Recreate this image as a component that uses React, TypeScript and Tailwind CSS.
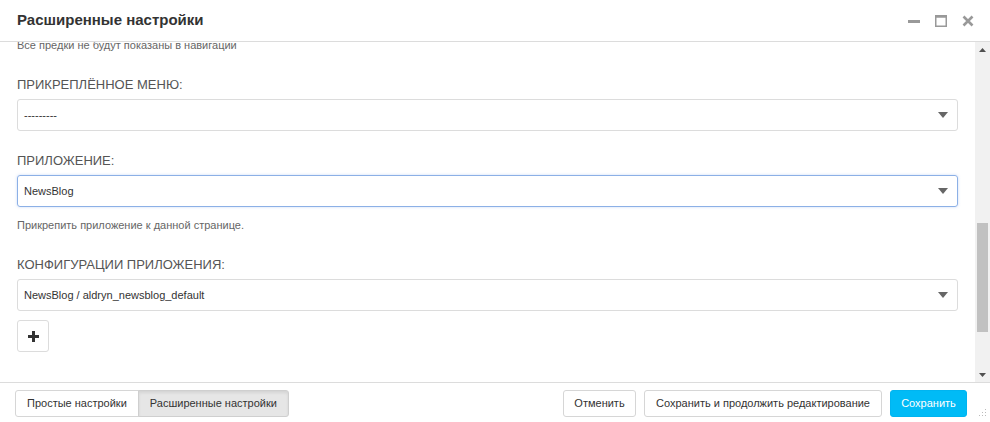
const font = { fontFamily: '"Liberation Sans", Arial, sans-serif' };

function Caret() {
  return (
    <svg width="10" height="6" viewBox="0 0 10 6" className="shrink-0">
      <path d="M0 0 L10 0 L5 6 Z" fill="#666" />
    </svg>
  );
}

function SelectBox({ value, focused = false }: { value: string; focused?: boolean }) {
  return (
    <div
      className={
        focused
          ? "flex h-[32px] items-center justify-between rounded-[3px] border border-[#8cb0e6] pl-[6px] pr-[9px] text-[11px] text-[#333] shadow-[0_0_3px_rgba(102,150,230,0.35)]"
          : "flex h-[32px] items-center justify-between rounded-[3px] border border-[#dcdcdc] pl-[6px] pr-[9px] text-[11px] text-[#333]"
      }
    >
      <span>{value}</span>
      <Caret />
    </div>
  );
}

function Label({ children }: { children: string }) {
  return <div className="mb-[6px] text-[13px] leading-[16px] text-[#555]">{children}</div>;
}

export default function App() {
  return (
    <div style={font} className="flex h-[422px] w-[990px] flex-col overflow-hidden bg-white">
      <header className="flex h-[42px] shrink-0 items-center justify-between border-b border-[#dcdcdc] pl-[17px] pr-[16px]">
        <h1 className="text-[15px] font-bold text-[#333]">Расширенные настройки</h1>
        <div className="flex items-center gap-[15px]">
          <svg width="12" height="12" viewBox="0 0 12 12">
            <rect x="0" y="5" width="12" height="3" fill="#999" />
          </svg>
          <svg width="12" height="12" viewBox="0 0 12 12">
            <rect x="0.75" y="0.75" width="10.5" height="10.5" fill="none" stroke="#999" strokeWidth="1.5" />
            <rect x="0.75" y="0.75" width="10.5" height="2" fill="#999" />
          </svg>
          <svg width="12" height="12" viewBox="0 0 12 12">
            <path d="M1.5 1.5 L10.5 10.5 M10.5 1.5 L1.5 10.5" stroke="#999" strokeWidth="2.6" />
          </svg>
        </div>
      </header>

      <div className="flex min-h-0 flex-1">
        <div className="min-w-0 flex-1 overflow-hidden pl-[17px] pr-[17px]">
          <p className="-mt-[4px] text-[11px] leading-[14px] text-[#666]">Все предки не будут показаны в навигации</p>

          <div className="mt-[25px]">
            <Label>ПРИКРЕПЛЁННОЕ МЕНЮ:</Label>
            <SelectBox value="---------" />
          </div>

          <div className="mt-[22px]">
            <Label>ПРИЛОЖЕНИЕ:</Label>
            <SelectBox value="NewsBlog" focused />
            <p className="mt-[11px] text-[11px] leading-[14px] text-[#666]">Прикрепить приложение к данной странице.</p>
          </div>

          <div className="mt-[25px]">
            <Label>КОНФИГУРАЦИИ ПРИЛОЖЕНИЯ:</Label>
            <SelectBox value="NewsBlog / aldryn_newsblog_default" />
            <button className="mt-[9px] flex h-[32px] w-[32px] items-center justify-center rounded-[3px] border border-[#dcdcdc] bg-white">
              <svg width="11" height="11" viewBox="0 0 11 11">
                <path d="M4 0 H7 V4 H11 V7 H7 V11 H4 V7 H0 V4 H4 Z" fill="#333" />
              </svg>
            </button>
          </div>
        </div>

        <div className="flex w-[15px] shrink-0 flex-col items-center bg-[#f1f1f1]">
          <div className="flex h-[15px] items-center justify-center">
            <svg width="7" height="4" viewBox="0 0 7 4">
              <path d="M0 4 L7 4 L3.5 0 Z" fill="#505050" />
            </svg>
          </div>
          <div className="mt-[166px] h-[109px] w-[11px] bg-[#c1c1c1]" />
          <div className="flex-1" />
          <div className="flex h-[15px] items-center justify-center">
            <svg width="7" height="4" viewBox="0 0 7 4">
              <path d="M0 0 L7 0 L3.5 4 Z" fill="#505050" />
            </svg>
          </div>
        </div>
      </div>

      <footer className="relative flex h-[40px] shrink-0 items-start justify-between border-t border-[#dcdcdc] pl-[15px] pr-[23px] pt-[7px] text-[11px] text-[#333]">
        <div className="flex">
          <button className="h-[27px] rounded-l-[3px] border border-[#d6d6d6] bg-white px-[11px]">Простые настройки</button>
          <button className="-ml-px h-[27px] rounded-r-[3px] border border-[#cfcfcf] bg-[#e6e6e6] px-[11px] shadow-[inset_0_2px_3px_rgba(0,0,0,0.08)]">
            Расширенные настройки
          </button>
        </div>
        <div className="flex gap-[8px]">
          <button className="h-[27px] w-[73px] rounded-[3px] border border-[#d6d6d6] bg-white">Отменить</button>
          <button className="h-[27px] w-[238px] rounded-[3px] border border-[#d6d6d6] bg-white">Сохранить и продолжить редактирование</button>
          <button className="h-[27px] w-[77px] rounded-[3px] border border-[#00b4f0] bg-[#00bbf6] text-white">Сохранить</button>
        </div>
        <svg width="8" height="8" viewBox="0 0 8 8" className="absolute bottom-[5px] right-[3px]">
          <g fill="#bbb">
            <rect x="6" y="0" width="1" height="1" />
            <rect x="3" y="3" width="1" height="1" />
            <rect x="6" y="3" width="1" height="1" />
            <rect x="0" y="6" width="1" height="1" />
            <rect x="3" y="6" width="1" height="1" />
            <rect x="6" y="6" width="1" height="1" />
          </g>
        </svg>
      </footer>
    </div>
  );
}
